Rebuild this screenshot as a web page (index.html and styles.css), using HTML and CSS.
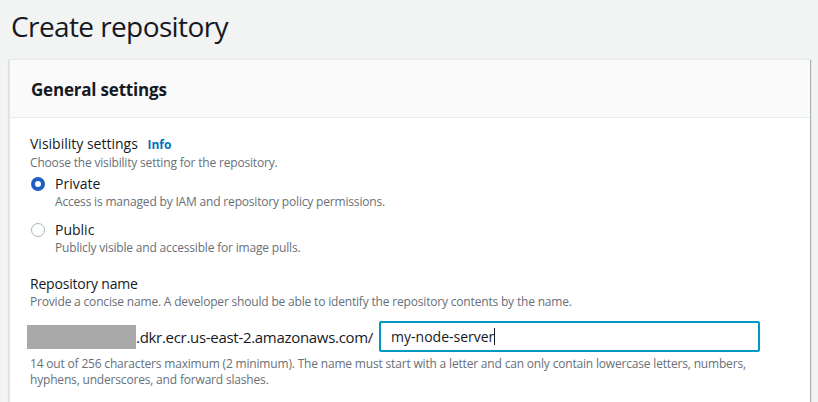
FILE: index.html
```html
<!DOCTYPE html>
<html>
<head>
<meta charset="utf-8">
<link rel="stylesheet" href="styles.css">
</head>
<body>
<div class="page">
  <h1 class="title">Create repository</h1>
  <section class="card">
    <header class="card-head"><h2>General settings</h2></header>
    <div class="card-body">
      <div class="field">
        <div class="label">Visibility settings <a class="info">Info</a></div>
        <div class="desc">Choose the visibility setting for the repository.</div>
        <div class="radio-list">
          <div class="radio">
            <span class="dot checked"></span>
            <div>
              <div class="radio-label">Private</div>
              <div class="desc">Access is managed by IAM and repository policy permissions.</div>
            </div>
          </div>
          <div class="radio">
            <span class="dot"></span>
            <div>
              <div class="radio-label">Public</div>
              <div class="desc">Publicly visible and accessible for image pulls.</div>
            </div>
          </div>
        </div>
      </div>
      <div class="field field-name">
        <div class="label">Repository name</div>
        <div class="desc">Provide a concise name. A developer should be able to identify the repository contents by the name.</div>
        <div class="name-row">
          <span class="redact"></span>
          <span class="prefix">.dkr.ecr.us-east-2.amazonaws.com/</span>
          <div class="input"><span>my-node-server</span><span class="caret"></span></div>
        </div>
        <div class="desc hint">14 out of 256 characters maximum (2 minimum). The name must start with a letter and can only contain lowercase letters, numbers, hyphens, underscores, and forward slashes.</div>
      </div>
    </div>
  </section>
</div>
</body>
</html>
```
FILE: styles.css
```css
html, body { margin: 0; padding: 0; }
body {
  background: #f2f3f3;
  font-family: "Open Sans", "Noto Sans", sans-serif;
  color: #16191f;
  width: 818px;
  height: 402px;
  overflow: hidden;
}
.page { padding: 0 8px 0 9px; }
.title {
  margin: 0;
  padding: 6px 0 0 2px;
  height: 59px;
  box-sizing: border-box;
  font-size: 28px;
  font-weight: 400;
  line-height: 40px;
  letter-spacing: -0.6px;
}
.card {
  background: #fff;
  border-left: 1px solid #e4e6e6;
  border-top: 1px solid #e8eaea;
  box-shadow: 1px 1px 1px 0 rgba(0,28,36,0.3), -1px 0 1px 0 rgba(0,28,36,0.08);
  width: 800px;
  height: 342px;
  overflow: hidden;
}
.card-head {
  background: #fafafa;
  border-bottom: 1px solid #eaeded;
  height: 58px;
  box-sizing: border-box;
  padding: 0 0 0 21px;
  display: flex;
  align-items: center;
}
.card-head h2 {
  margin: 0;
  font-size: 17px;
  font-weight: 700;
  line-height: 22px;
  padding-top: 2px;
  letter-spacing: -0.2px;
}
.card-body { padding: 16px 20px 0 20px; }
.label {
  font-size: 14px;
  line-height: 20px;
}
.field-name .label { letter-spacing: -0.2px; }
.info {
  color: #0073bb;
  font-weight: 700;
  font-size: 12px;
  margin-left: 6px;
  letter-spacing: 0;
}
.desc {
  font-size: 12px;
  line-height: 16px;
  color: #687078;
  letter-spacing: -0.18px;
}
.radio-list { padding-top: 3px; }
.radio {
  display: flex;
  gap: 10px;
  margin-bottom: 10px;
}
.dot {
  width: 14px;
  height: 14px;
  box-sizing: border-box;
  border-radius: 50%;
  border: 1.5px solid #aab7b8;
  margin-top: 3px;
  margin-left: 1px;
  flex: none;
}
.dot.checked {
  border: 4px solid #1f5fc2;
  background: #fff;
}
.radio-label { font-size: 14px; line-height: 20px; }
.field-name { padding-top: 8px; }
.name-row {
  display: flex;
  align-items: center;
  margin: 11px 0 4px -3px;
}
.redact {
  width: 109px;
  height: 24px;
  background: #a8a8a8;
  display: inline-block;
}
.prefix {
  font-size: 15px;
  line-height: 24px;
  letter-spacing: -0.3px;
}
.input {
  margin-left: 6px;
  width: 381px;
  height: 31px;
  box-sizing: border-box;
  border: 2px solid #0098c4;
  border-radius: 2px;
  padding: 0 10px;
  display: flex;
  align-items: center;
  font-size: 14px;
}
.caret {
  width: 1px;
  height: 17px;
  background: #16191f;
}
.hint { padding-right: 20px; }
```
